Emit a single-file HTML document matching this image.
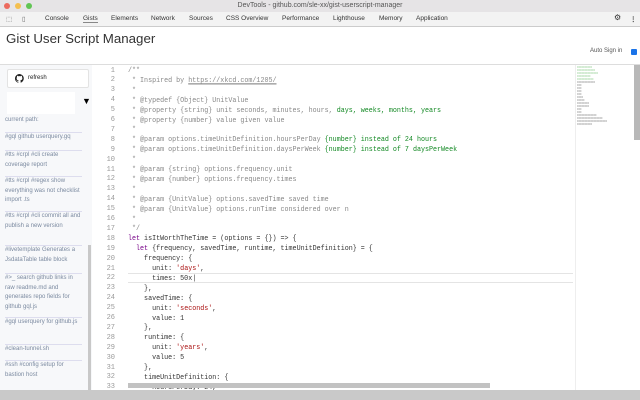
<!DOCTYPE html>
<html><head><style>
*{margin:0;padding:0;box-sizing:border-box}
body{width:640px;height:400px;overflow:hidden;background:#fff;font-family:"Liberation Sans",sans-serif;position:relative}
.tb{position:absolute;left:0;top:0;width:640px;height:12px;background:#e6e4e6;font-size:7px;color:#555;text-align:center;line-height:12px}
.dot{position:absolute;top:3px;width:6px;height:6px;border-radius:50%}
.tabs{position:absolute;top:12px;left:0;width:640px;height:15px;background:#f3f3f3;border-bottom:1px solid #ccc;font-size:6.5px;color:#333}
.tabs span{position:absolute;top:3px}
h1{position:absolute;left:6px;top:31px;font-size:13.3px;font-weight:normal;color:#333}
.hr{position:absolute;left:0;top:64px;width:640px;height:1px;background:#ddd}
.side{position:absolute;left:0;top:65px;width:92px;height:325px;background:#f7f8fa}
.btn{position:absolute;left:7px;top:69px;width:82px;height:19px;background:#fff;border:1px solid #e3e3e3;border-radius:2px;font-size:6px;line-height:17px;padding-left:20px;color:#222}
.item{position:absolute;left:5px;width:77px;font-size:6px;line-height:9.5px;color:#7b8aa0;border-top:1px solid #dde}
.code{position:absolute;left:92px;top:65px;width:480px;height:325px;font-family:"Liberation Mono",monospace;font-size:6.7px;color:#333}
.ln{position:absolute;left:0;width:23px;text-align:right;color:#999;font-size:7px}
.cl{position:absolute;left:36px;white-space:pre;line-height:10px;transform:scaleY(1.15);transform-origin:0 50%}
.c{color:#888}.k{color:#708}.s{color:#a11}.t{color:#182}
</style></head><body>
<div class="tb"><div class="dot" style="left:4px;background:#ec6a5e"></div><div class="dot" style="left:15px;background:#f4bf4f"></div><div class="dot" style="left:26px;background:#61c554"></div>DevTools - github.com/sle-xx/gist-userscript-manager</div>
<div class="tabs">
<span style="left:6px;color:#666">⬚</span><span style="left:22px;color:#666">▯</span>
<span style="left:45px">Console</span><span style="left:83px;border-bottom:1px solid #888">Gists</span><span style="left:111px">Elements</span><span style="left:151px">Network</span><span style="left:189px">Sources</span><span style="left:226px">CSS Overview</span><span style="left:282px">Performance</span><span style="left:333px">Lighthouse</span><span style="left:379px">Memory</span><span style="left:416px">Application</span>
<span style="left:614px;font-size:8px;top:1px">⚙</span><span style="left:630px;font-weight:bold">⋮</span></div>
<h1>Gist User Script Manager</h1>
<div style="position:absolute;left:590px;top:48px;font-size:6px;color:#555">Auto Sign in</div>
<div style="position:absolute;left:631px;top:49px;width:6px;height:6px;background:#1a73e8;border-radius:1px"></div>
<div class="hr"></div>
<div class="side"></div>
<div class="btn"><svg style="position:absolute;left:7px;top:4px" width="9" height="9" viewBox="0 0 16 16"><path fill="#222" d="M8 0a8 8 0 0 0-2.5 15.6c.4 0 .5-.2.5-.4v-1.5c-2.2.5-2.7-1-2.7-1-.4-.9-.9-1.2-.9-1.2-.7-.5.1-.5.1-.5.8.1 1.2.8 1.2.8.7 1.3 1.9.9 2.3.7.1-.5.3-.9.5-1.1-1.8-.2-3.6-.9-3.6-4 0-.9.3-1.6.8-2.1-.1-.2-.4-1 .1-2.1 0 0 .7-.2 2.2.8a7.5 7.5 0 0 1 4 0c1.5-1 2.2-.8 2.2-.8.4 1.1.2 1.9.1 2.1.5.6.8 1.3.8 2.1 0 3.1-1.9 3.7-3.6 3.9.3.3.5.8.5 1.5v2.2c0 .2.1.5.6.4A8 8 0 0 0 8 0z"/></svg>refresh</div>
<div style="position:absolute;left:7px;top:92px;width:68px;height:22px;background:#fff"></div>
<div style="position:absolute;left:82px;top:96px;font-size:9px">▼</div>
<div style="position:absolute;left:5px;top:117px;font-size:6px;color:#7b8aa0">current path:</div>
<div class="item" style="top:132px">#gql github userquery.gq</div>
<div class="item" style="top:150px">#tts #crpl #cli create coverage report</div>
<div class="item" style="top:176px">#tts #crpl #regex show everything was not checklist import .ts</div>
<div class="item" style="top:211px">#tts #crpl #cli commit all and publish a new version</div>
<div class="item" style="top:245px">#livetemplate Generates a JsdataTable table block</div>
<div class="item" style="top:273px">#>_ search github links in raw readme.md and generates repo fields for github gql.js</div>
<div class="item" style="top:317px">#gql userquery for github.js</div>
<div class="item" style="top:344px">#clean-tunnel.sh</div>
<div class="item" style="top:360px">#ssh #config setup for bastion host</div>
<div style="position:absolute;left:88px;top:245px;width:3px;height:145px;background:#c8c8c8"></div>
<div style="position:absolute;left:128px;top:273px;width:445px;height:10px;border-top:1px solid #e4e4e4;border-bottom:1px solid #e4e4e4"></div>
<div class="code" id="code"></div>
<div style="position:absolute;left:128px;top:383px;width:362px;height:5px;background:#c2c2c2"></div>
<div style="position:absolute;left:575px;top:65px;width:1px;height:325px;background:#eee"></div>
<div style="position:absolute;left:634px;top:65px;width:6px;height:75px;background:#b8b8b8"></div>
<div style="position:absolute;left:577px;top:66px;width:55px;height:80px;font-size:2.5px;line-height:3px;color:#4a4;overflow:hidden;font-family:'Liberation Mono',monospace">==========<br>============<br>==============<br>=========<br>===========<br><span style="color:#333">============<br>===<br>===<br>===<br>===<br>====<br>=====<br>========<br>========<br>===<br>===<br>=============<br>=================<br>====================<br>==========</span></div>
<div style="position:absolute;left:0;top:390px;width:640px;height:10px;background:#c9c9c9"></div>
<script>
var L=[
'<span class="c">/**</span>',
'<span class="c"> * Inspired by <u>https://xkcd.com/1205/</u></span>',
'<span class="c"> *</span>',
'<span class="c"> * @typedef {Object} UnitValue</span>',
'<span class="c"> * @property {string} unit seconds, minutes, hours, <span class="t">days, weeks, months, years</span></span>',
'<span class="c"> * @property {number} value given value</span>',
'<span class="c"> *</span>',
'<span class="c"> * @param options.timeUnitDefinition.hoursPerDay <span class="t">{number} instead of 24 hours</span></span>',
'<span class="c"> * @param options.timeUnitDefinition.daysPerWeek <span class="t">{number} instead of 7 daysPerWeek</span></span>',
'<span class="c"> *</span>',
'<span class="c"> * @param {string} options.frequency.unit</span>',
'<span class="c"> * @param {number} options.frequency.times</span>',
'<span class="c"> *</span>',
'<span class="c"> * @param {UnitValue} options.savedTime saved time</span>',
'<span class="c"> * @param {UnitValue} options.runTime considered over n</span>',
'<span class="c"> *</span>',
'<span class="c"> */</span>',
'<span class="k">let</span> isItWorthTheTime = (options = {}) => {',
'  <span class="k">let</span> {frequency, savedTime, runtime, timeUnitDefinition} = {',
'    frequency: {',
'      unit: <span class="s">\'days\'</span>,',
'      times: 50x|',
'    },',
'    savedTime: {',
'      unit: <span class="s">\'seconds\'</span>,',
'      value: 1',
'    },',
'    runtime: {',
'      unit: <span class="s">\'years\'</span>,',
'      value: 5',
'    },',
'    timeUnitDefinition: {',
'      hoursPerDay: 24,'];
var h='';for(var i=0;i<L.length;i++){var y=0+i*9.9;h+='<div class="ln" style="top:'+(y+1.5)+'px">'+(i+1)+'</div><div class="cl" style="top:'+(y+1)+'px">'+L[i]+'</div>';}
document.getElementById('code').innerHTML=h;
</script>
</body></html>
